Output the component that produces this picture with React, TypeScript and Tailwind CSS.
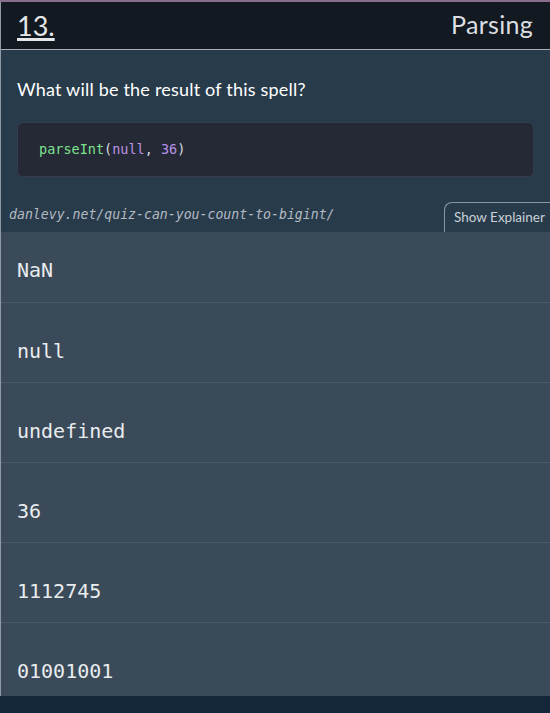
const options = ['NaN', 'null', 'undefined', '36', '1112745', '01001001'];

export default function App() {
  return (
    <div className="min-h-screen w-full bg-[#13263a]">
      <div className="h-[2px] bg-[#8a6d8c]" />
      <div className="border-l border-[#8f9aa3]">
        {/* Header */}
        <div className="h-[48px] bg-[#121920] border-b border-[#a7aeb5] flex items-center justify-between pl-[16px] pr-[17px] font-['Lato',sans-serif]">
          <span className="text-[27px] text-[#e4e6e8] underline underline-offset-[2px] decoration-[3px] leading-none -mt-[1px]">13.</span>
          <span className="text-[25px] text-[#dcdfe2] leading-none -mt-[3px] tracking-[0.3px]">Parsing</span>
        </div>

        {/* Question */}
        <div className="bg-[#283b4b]">
          <div className="pt-[28px] px-[16px] text-[18px] leading-[22px] tracking-[0.2px] text-white font-['Lato',sans-serif]">
            What will be the result of this spell?
          </div>
          <div className="mt-[22px] mx-[16px] h-[55px] rounded-[6px] bg-[#252935] border border-[#363c4b] flex items-center px-[21px] font-['DejaVu_Sans_Mono',monospace] text-[13.5px] whitespace-pre">
            <span>
              <span className="text-[#7ee38f]">parseInt</span>
              <span className="text-[#d9dbe0]">(</span>
              <span className="text-[#b892e6]">null</span>
              <span className="text-[#d9dbe0]">, </span>
              <span className="text-[#b892e6]">36</span>
              <span className="text-[#d9dbe0]">)</span>
            </span>
          </div>
          <div className="mt-[25px] h-[30px] flex items-stretch justify-between">
            <span className="pl-[8px] self-center -mt-[4px] italic text-[13.2px] text-[#b3bac2] font-['DejaVu_Sans_Mono',monospace]">
              danlevy.net/quiz-can-you-count-to-bigint/
            </span>
            <div className="w-[106px] rounded-tl-[8px] border-t border-l border-[#8896a2] flex items-center pl-[9px] text-[13.5px] text-[#c9d0d7] font-['Lato',sans-serif]">
              Show Explainer
            </div>
          </div>
        </div>

        {/* Options */}
        <div className="bg-[#3a4a58] font-['DejaVu_Sans_Mono',monospace] text-[20px] text-[#e8ecef]">
          {options.map((opt, i) => (
            <div
              key={opt}
              className={`${i === 0 ? 'h-[70px] pt-[26px]' : i === options.length - 1 ? 'h-[74px] pt-[36px] border-t border-[#4a5a68]' : 'h-[80px] pt-[36px] border-t border-[#4a5a68]'} px-[16px] leading-[24px]`}
            >
              {opt}
            </div>
          ))}
        </div>
      </div>
    </div>
  );
}
